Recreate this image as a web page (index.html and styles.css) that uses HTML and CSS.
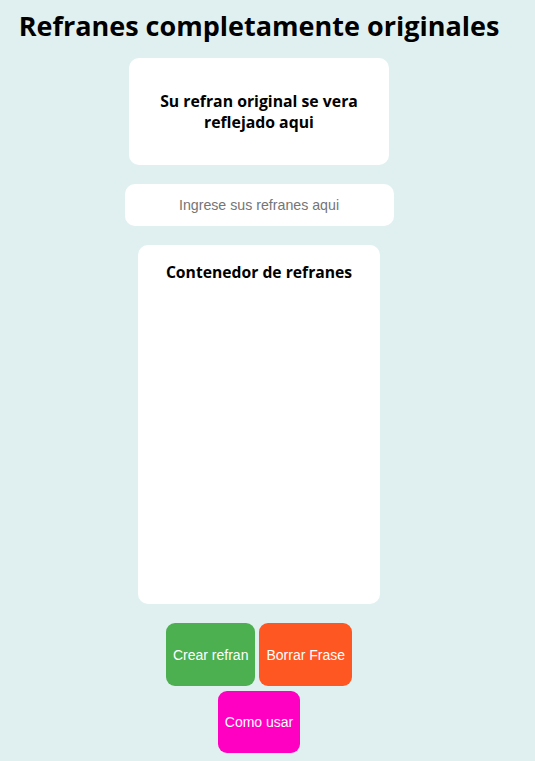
FILE: index.html
```html
<!DOCTYPE html>
<html lang="es">
<head>
<meta charset="utf-8">
<title>Refranes completamente originales</title>
<link rel="stylesheet" href="styles.css">
</head>
<body>
<main class="page">
  <h1 class="title">Refranes completamente originales</h1>
  <section class="output-card">
    <p class="output-text">Su refran original se vera reflejado aqui</p>
  </section>
  <input class="phrase-input" type="text" placeholder="Ingrese sus refranes aqui">
  <section class="list-card">
    <h2 class="list-title">Contenedor de refranes</h2>
  </section>
  <div class="actions">
    <button class="btn btn-create">Crear refran</button>
    <button class="btn btn-delete">Borrar Frase</button>
    <button class="btn btn-help">Como usar</button>
  </div>
</main>
</body>
</html>
```

FILE: styles.css
```css
html, body {
  margin: 0;
  padding: 0;
  background: #e0f0f0;
}
body {
  width: 518px;
  font-family: "Open Sans", "Noto Sans", sans-serif;
}
.page {
  display: flex;
  flex-direction: column;
  align-items: center;
  gap: 19px;
  padding: 6px 8px 8px;
}
.title {
  margin: 0 0 -7px;
  font-size: 27px;
  line-height: 40px;
  font-weight: 700;
  color: #000;
  text-align: center;
  white-space: nowrap;
}
.output-card {
  width: 260px;
  height: 107px;
  box-sizing: border-box;
  background: #fff;
  border-radius: 10px;
  display: flex;
  align-items: center;
  justify-content: center;
  padding: 0 20px;
}
.output-text {
  margin: 0;
  font-size: 15.8px;
  line-height: 21px;
  font-weight: 700;
  text-align: center;
}
.phrase-input {
  width: 269px;
  height: 42px;
  box-sizing: border-box;
  border: none;
  outline: none;
  border-radius: 10px;
  background: #fff;
  text-align: center;
  font-family: "Liberation Sans", Arial, sans-serif;
  font-size: 14.2px;
  color: #333;
}
.phrase-input::placeholder {
  color: #757575;
}
.list-card {
  width: 242px;
  height: 359px;
  box-sizing: border-box;
  background: #fff;
  border-radius: 10px;
  padding-top: 15px;
}
.list-title {
  margin: 0;
  font-size: 15.7px;
  line-height: 24px;
  font-weight: 700;
  text-align: center;
}
.actions {
  width: 200px;
  display: flex;
  flex-wrap: wrap;
  justify-content: center;
  column-gap: 4px;
  row-gap: 5px;
}
.btn {
  height: 63px;
  padding: 0 7px;
  border: none;
  border-radius: 9px;
  color: #fff;
  font-family: "Liberation Sans", Arial, sans-serif;
  font-size: 14px;
}
.btn-create { background: #4caf50; }
.btn-delete { background: #ff5722; }
.btn-help { background: #ff00c3; height: 62px; }
```
